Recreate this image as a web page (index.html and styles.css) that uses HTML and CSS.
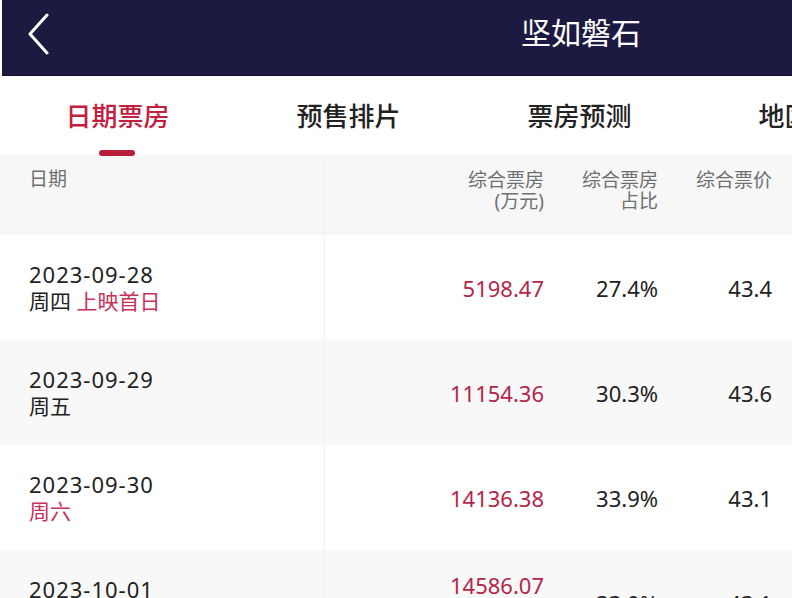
FILE: index.html
```html
<!DOCTYPE html>
<html lang="zh-CN">
<head>
  <meta charset="UTF-8">
  <meta name="viewport" content="width=device-width, initial-scale=1.0">
  <title>坚如磐石</title>
  <link rel="stylesheet" href="styles.css">
</head>
<body>

  <header class="top-bar">
    <a class="back" href="#">
      <svg width="24" height="42" viewBox="0 0 24 42">
        <polyline points="20,2 3,21 20,40" fill="none" stroke="#fff" stroke-width="3" stroke-linecap="round" stroke-linejoin="round"/>
      </svg>
    </a>
    <h1>坚如磐石</h1>
  </header>

  <nav class="tabs">
    <div class="tab active">日期票房</div>
    <div class="tab">预售排片</div>
    <div class="tab">票房预测</div>
    <div class="tab">地区票房</div>
  </nav>

  <main class="table">
    <div class="row head">
      <div class="cell date">日期</div>
      <div class="cell num">综合票房<br>(万元)</div>
      <div class="cell num">综合票房<br>占比</div>
      <div class="cell num">综合票价</div>
    </div>

    <div class="row">
      <div class="cell date"><span class="day">2023-09-28</span><br>周四 <span class="mark">上映首日</span></div>
      <div class="cell num money">5198.47</div>
      <div class="cell num">27.4%</div>
      <div class="cell num">43.4</div>
    </div>

    <div class="row alt">
      <div class="cell date"><span class="day">2023-09-29</span><br>周五</div>
      <div class="cell num money">11154.36</div>
      <div class="cell num">30.3%</div>
      <div class="cell num">43.6</div>
    </div>

    <div class="row">
      <div class="cell date"><span class="day">2023-09-30</span><br><span class="mark">周六</span></div>
      <div class="cell num money">14136.38</div>
      <div class="cell num">33.9%</div>
      <div class="cell num">43.1</div>
    </div>

    <div class="row alt">
      <div class="cell date"><span class="day">2023-10-01</span><br><span class="mark">周日</span></div>
      <div class="cell num money raised">14586.07</div>
      <div class="cell num">33.9%</div>
      <div class="cell num">43.1</div>
    </div>
  </main>

</body>
</html>
```

FILE: styles.css
```css
body {
  margin: 0;
  padding: 0;
  overflow: hidden;
  background-color: #fff;
  font-family: 'Noto Sans', 'Noto Sans CJK SC', sans-serif;
  color: #222;
}

.top-bar {
  display: flex;
  align-items: center;
  height: 76px;
  margin-left: 2px;
  background-color: #1c1a41;
  border-bottom: 1px solid #141230;
  box-sizing: border-box;
}

.back {
  display: flex;
  width: 50px;
  padding-left: 25px;
  margin-top: -8px;
}

.top-bar h1 {
  flex: 1;
  margin: -14px 0 0 0;
  padding-left: 444px;
  font-size: 30px;
  font-weight: 400;
  color: #fff;
}

.tabs {
  display: flex;
  height: 79px;
  padding-left: 2px;
  white-space: nowrap;
}

.tab {
  position: relative;
  flex: none;
  width: 231px;
  padding-top: 22px;
  text-align: center;
  font-size: 26px;
  font-weight: 500;
  line-height: 36px;
  color: #222;
}

.tab.active {
  color: #c3203f;
}

.tab.active::after {
  content: '';
  position: absolute;
  left: 97px;
  bottom: -1px;
  width: 36px;
  height: 6px;
  border-radius: 3px;
  background-color: #b81e3a;
}

.table {
  display: flex;
  flex-direction: column;
}

.row {
  display: grid;
  grid-template-columns: 325px 219px 114px 114px;
  align-items: center;
  height: 105px;
  padding-right: 20px;
  background-color: #fff;
}

.row.alt {
  background-color: #f8f8f8;
}

.row.head {
  height: 80px;
  align-items: start;
  background-color: #f7f7f7;
}

.cell {
  font-size: 22px;
  line-height: 26px;
}

.date {
  height: 100%;
  padding-top: 26px;
  padding-left: 29px;
  border-right: 1px solid #f0f0f0;
  box-sizing: border-box;
  font-size: 21px;
}

.day {
  font-size: 22px;
  letter-spacing: 1px;
}

.num {
  text-align: right;
  color: #222;
}

.money {
  color: #b3264a;
}

.money.raised {
  align-self: start;
  padding-top: 22px;
}

.mark {
  color: #c8325a;
}

.head .cell {
  padding-top: 15px;
  font-size: 19px;
  line-height: 21px;
  color: #707070;
}

.head .date {
  height: 80px;
  padding-top: 14px;
}
```
